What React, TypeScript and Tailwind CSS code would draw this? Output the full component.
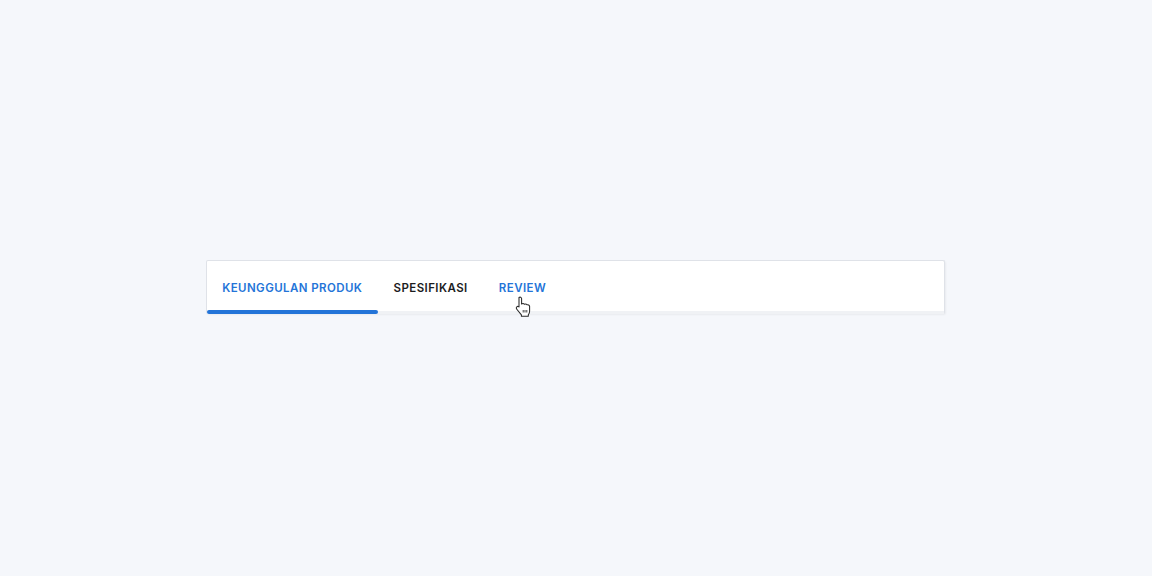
const tabs = [
  { label: "KEUNGGULAN PRODUK", color: "text-[#2374d8]", active: true },
  { label: "SPESIFIKASI", color: "text-[#1c1c1e]", active: false },
  { label: "REVIEW", color: "text-[#2374d8]", active: false },
]

function HandCursor() {
  return (
    <svg width="18" height="22" viewBox="0 0 18 22" className="absolute left-[31px] top-[35px]">
      <path
        d="M4 1.5c1 -.8 2.4 -.3 2.6 1v5.4c1.2 -.5 2.3 -.3 2.9 .4c1 -.4 2 -.2 2.5 .5c1.2 -.3 2.4 .3 2.6 1.5v5c0 1.6 -.5 2.7 -1.3 3.6v1.3H6.4v-1.3L2 13.5c-.9 -1 -.9 -2.1 -.2 -2.7c.7 -.6 1.6 -.4 2.2 .1V2.6c0 -.4 -.1 -.8 0 -1.1z"
        fill="#fff"
        stroke="#2a2a2a"
        strokeWidth="1.05"
        strokeLinejoin="round"
      />
      <path d="M8.2 14v2.5M10 14v2.5M11.8 14v2.5" stroke="#444" strokeWidth="1" />
    </svg>
  )
}

export default function App() {
  return (
    <div className="min-h-screen w-full bg-[#f5f7fb] pr-[1px] pb-[2px] flex items-center justify-center font-['Inter',sans-serif]">
      <div className="w-[739px] h-[54px] bg-white rounded-[2px] border border-b-0 border-[#dfe2e8] shadow-[1px_1px_2px_rgba(0,0,0,0.05)] flex flex-col">
        <div className="flex flex-1">
          {tabs.map((tab) => (
            <div
              key={tab.label}
              className={`relative flex items-center pl-[15.2px] pr-[16px] pt-[6px] text-[11.5px] font-semibold tracking-[0.42px] ${tab.color}`}
            >
              {tab.label}
              {tab.label === "REVIEW" && <HandCursor />}
              {tab.active && (
                <div className="absolute left-0 right-0 bottom-[-3px] h-[4px] rounded-full bg-[#2374d8]" />
              )}
            </div>
          ))}
        </div>
        <div className="h-[3px] bg-[#f0f2f5]" />
      </div>
    </div>
  )
}
